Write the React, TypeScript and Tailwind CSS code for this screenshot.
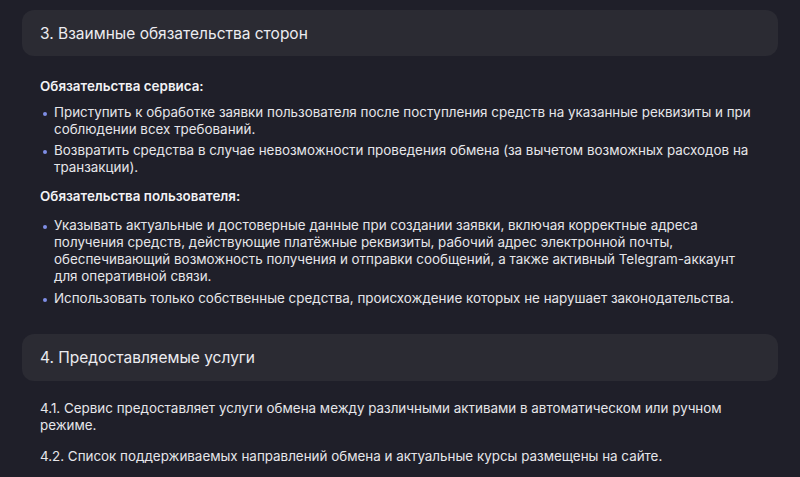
import React from 'react';

const Bullet = ({ children }: { children: React.ReactNode }) => (
  <li className="flex gap-[7px]">
    <span className="mt-[8px] ml-[3px] w-[4px] h-[4px] rounded-full bg-[#7f8ee6] shrink-0" />
    <span>{children}</span>
  </li>
);

export default function App() {
  return (
    <div
      className="w-[800px] h-[477px] overflow-hidden bg-[#1f1f29] text-[#e6e6ea] text-[13.4px] leading-[17px] pt-[10px] px-[22px]"
      style={{ fontFamily: 'Inter, sans-serif' }}
    >
      <div className="h-[46px] rounded-xl bg-[#2b2b33] flex items-center px-[18px] text-[15.5px] text-[#ececf0]">
        3. Взаимные обязательства сторон
      </div>
      <div className="px-[18px] pt-[22px] pb-[27px]">
        <p className="font-semibold text-[#f2f2f5]">Обязательства сервиса:</p>
        <ul className="mt-[9px] flex flex-col gap-[4px]">
          <Bullet>Приступить к обработке заявки пользователя после поступления средств на указанные реквизиты и при соблюдении всех требований.</Bullet>
          <Bullet>Возвратить средства в случае невозможности проведения обмена (за вычетом возможных расходов на транзакции).</Bullet>
        </ul>
        <p className="font-semibold text-[#f2f2f5] mt-[12px]">Обязательства пользователя:</p>
        <ul className="mt-[12px] flex flex-col gap-[5px]">
          <Bullet>Указывать актуальные и достоверные данные при создании заявки, включая корректные адреса получения средств, действующие платёжные реквизиты, рабочий адрес электронной почты, обеспечивающий возможность получения и отправки сообщений, а также активный Telegram-аккаунт для оперативной связи.</Bullet>
          <Bullet>Использовать только собственные средства, происхождение которых не нарушает законодательства.</Bullet>
        </ul>
      </div>
      <div className="h-[47px] rounded-xl bg-[#2b2b33] flex items-center px-[18px] text-[15.5px] text-[#ececf0]">
        4. Предоставляемые услуги
      </div>
      <div className="px-[18px] pt-[19px] flex flex-col gap-[14px]">
        <p>4.1. Сервис предоставляет услуги обмена между различными активами в автоматическом или ручном режиме.</p>
        <p>4.2. Список поддерживаемых направлений обмена и актуальные курсы размещены на сайте.</p>
        <p>4.3. Сервис не предоставляет инвестиционных, финансовых или консультационных услуг.</p>
      </div>
    </div>
  );
}
